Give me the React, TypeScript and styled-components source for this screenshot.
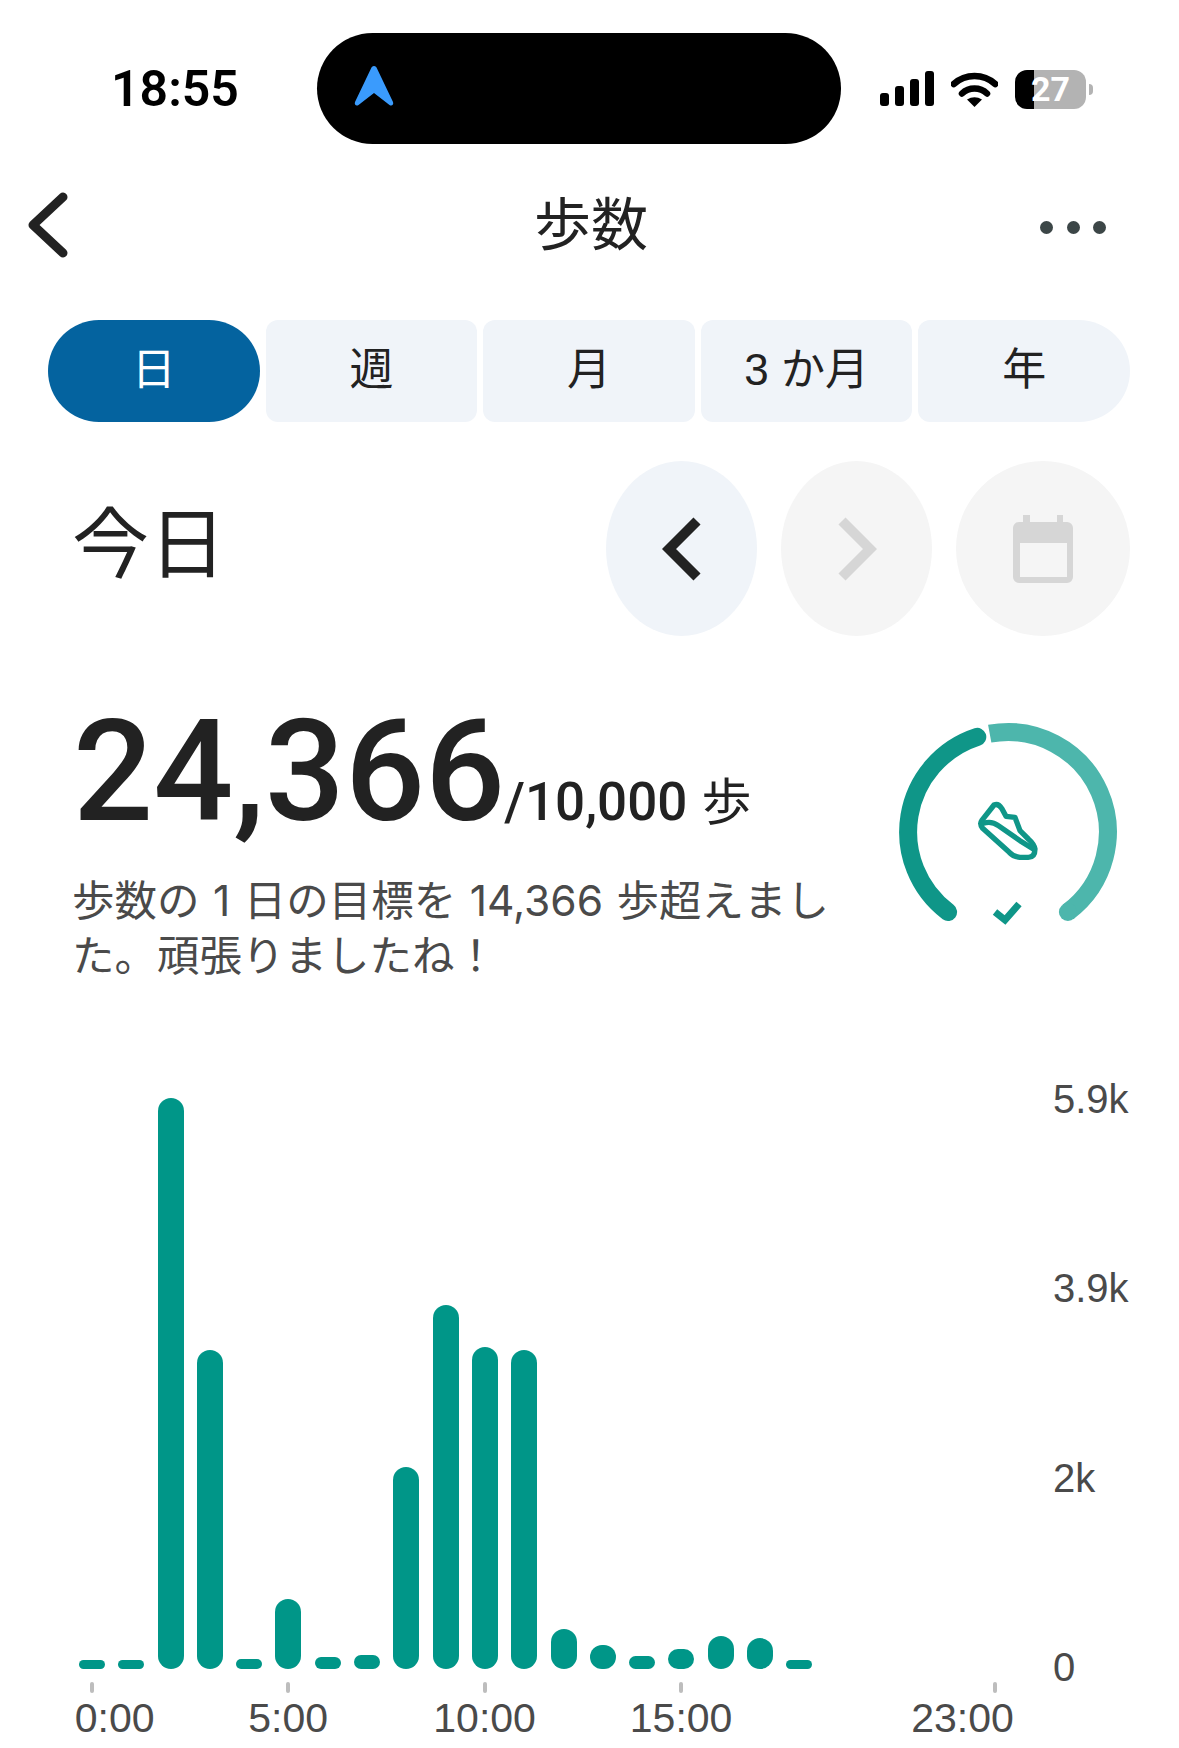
import React from "react";
import styled, { createGlobalStyle } from "styled-components";

const Global = createGlobalStyle`
  html, body { margin: 0; padding: 0; background: #fff; }
  * { box-sizing: border-box; }
`;

const CJK = `"Liberation Sans", "Noto Sans CJK JP", sans-serif`;

const Page = styled.div`
  width: 1179px;
  height: 1748px;
  overflow: hidden;
  background: #fff;
  font-family: ${CJK};
  color: #222;
`;

const StatusBar = styled.header`
  display: flex;
  align-items: center;
  height: 111px;
  margin-top: 33px;
  padding-left: 111px;
`;
const Clock = styled.span`
  width: 206px;
  font: 600 50px/1 Roboto, sans-serif;
  color: #000;
`;
const Island = styled.div`
  width: 524px;
  height: 111px;
  border-radius: 56px;
  background: #000;
  display: flex;
  align-items: center;
  padding-left: 36px;
`;
const Arrow = styled.svg`
  margin-bottom: 6px;
`;
const StatusIcons = styled.div`
  display: flex;
  align-items: center;
  margin-left: 39px;
`;
const Wifi = styled.svg`
  margin-left: 17px;
  margin-top: 1px;
`;
const Battery = styled.div`
  width: 71px;
  height: 39px;
  margin-left: 17px;
  margin-top: 2px;
  border-radius: 12px;
  background: linear-gradient(90deg, #000 27%, #b3b3b3 27%);
  color: #fff;
  font: 700 34px/39px Roboto, sans-serif;
  text-align: center;
`;
const BatteryNub = styled.div`
  width: 4px;
  height: 11px;
  margin-left: 3px;
  margin-top: 2px;
  border-radius: 0 6px 6px 0;
  background: #b3b3b3;
`;

const NavBar = styled.nav`
  display: flex;
  align-items: center;
  justify-content: space-between;
  height: 66px;
  margin-top: 48px;
  padding: 0 73px 0 26px;
`;
const NavTitle = styled.h1`
  margin: 0 0 0 74px;
  font-size: 57px;
  font-weight: 400;
  line-height: 66px;
  color: #222;
`;
const Dots = styled.div`
  display: flex;
  gap: 13.5px;
  margin-top: 4px;
`;
const Dot = styled.span`
  width: 13px;
  height: 13px;
  border-radius: 50%;
  background: #3c4647;
`;

const Tabs = styled.div`
  display: flex;
  gap: 6px;
  height: 102px;
  margin: 62px 49px 0 48px;
`;
const Tab = styled.div<{ $active?: boolean; $first?: boolean; $last?: boolean }>`
  flex: 1;
  display: flex;
  align-items: center;
  justify-content: center;
  padding-bottom: 10px;
  font-size: 44px;
  background: ${(p) => (p.$active ? "#04639f" : "#f0f4f9")};
  color: ${(p) => (p.$active ? "#fff" : "#222")};
  border-radius: ${(p) =>
    p.$first ? "51px" : p.$last ? "12px 51px 51px 12px" : "12px"};
`;

const DateRow = styled.div`
  display: flex;
  align-items: center;
  justify-content: space-between;
  height: 175px;
  margin-top: 39px;
  padding: 0 49px 0 72px;
`;
const Today = styled.h2`
  margin: 0 0 6px;
  font-size: 77px;
  font-weight: 400;
  line-height: 1;
  color: #222;
`;
const RoundButtons = styled.div`
  display: flex;
  gap: 24px;
`;
const RoundButton = styled.div<{ $off?: boolean; $wide?: boolean }>`
  width: ${(p) => (p.$wide ? "174px" : "151px")};
  height: 175px;
  border-radius: 50%;
  display: flex;
  align-items: center;
  justify-content: center;
  background: ${(p) => (p.$off ? "#f5f5f5" : "#f0f4f9")};
`;

const Summary = styled.section`
  display: flex;
  justify-content: space-between;
  margin-top: 61px;
  padding: 0 51px 0 72px;
`;
const SummaryText = styled.div`
  width: 770px;
`;
const Count = styled.div`
  display: flex;
  align-items: baseline;
  height: 150px;
  margin-left: 1px;
  white-space: nowrap;
`;
const CountValue = styled.span`
  font: 500 141px/150px Roboto, sans-serif;
  color: #222;
`;
const CountGoal = styled.span`
  margin-left: -1px;
  font: 500 53px/1 Roboto, "Noto Sans CJK JP", sans-serif;
  color: #222;
`;
const CountUnit = styled.span`
  margin-left: 14px;
  font: 400 50px/1 "Noto Sans CJK JP", sans-serif;
  color: #222;
`;
const Message = styled.p`
  margin: 26px 0 0;
  font-family: Inter, "Noto Sans CJK JP", sans-serif;
  font-size: 42.5px;
  line-height: 55px;
  word-spacing: 1.5px;
  color: #4a4a4a;
`;
const Ring = styled.svg`
  flex: none;
  margin-top: 15px;
`;

const Chart = styled.section`
  display: flex;
  margin-top: 94px;
`;
const Plot = styled.div`
  width: 1053px;
`;
const Bars = styled.div`
  display: flex;
  align-items: flex-end;
  gap: 13.3px;
  height: 592px;
  padding-left: 79px;
`;
const Bar = styled.div`
  width: 26px;
  border-radius: 13px;
  background: #009688;
`;
const AxisGrid = styled.div`
  display: grid;
  grid-template-columns: repeat(24, 39.3px);
  padding-left: 72px;
`;
const Tick = styled.span<{ $col: number }>`
  grid-column: ${(p) => p.$col};
  grid-row: 1;
  justify-self: center;
  width: 4px;
  height: 11px;
  margin-top: 13px;
  border-radius: 2px;
  background: #bdbdbd;
`;
const AxisLabel = styled.span<{ $col: number; $shift?: number }>`
  grid-column: ${(p) => p.$col};
  grid-row: 2;
  justify-self: center;
  margin-left: ${(p) => p.$shift ?? 0}px;
  font-size: 41px;
  line-height: 44px;
  margin-top: 3px;
  white-space: nowrap;
  color: #4a4a4a;
`;
const YAxis = styled.div`
  display: flex;
  flex-direction: column;
  justify-content: space-between;
  height: 612px;
  font-size: 40px;
  line-height: 44px;
  color: #4a4a4a;
`;

const tops = [1660, 1660, 1098, 1350, 1659, 1599, 1657, 1655, 1467, 1305, 1347, 1350, 1629, 1645, 1656, 1649, 1636, 1638, 1660];
const barHeights = tops.map((t) => 1669 - t);
const ticks = [
  { col: 1, label: "0:00", shift: 46 },
  { col: 6, label: "5:00" },
  { col: 11, label: "10:00" },
  { col: 16, label: "15:00" },
  { col: 24, label: "23:00", shift: -66 },
];

export default function App() {
  return (
    <Page>
      <Global />
      <StatusBar>
        <Clock>18:55</Clock>
        <Island>
          <Arrow width="42" height="42" viewBox="0 0 42 42">
            <path d="M21 1 C22.500 1 23.500 2 24 3.500 L40 37 C41 40 38.500 41.500 36.500 40 L21 28 L5.500 40 C3.500 41.500 1 40 2 37 L18 3.500 C18.500 2 19.500 1 21 1 Z" fill="#3a9bfd" />
          </Arrow>
        </Island>
        <StatusIcons>
          <svg width="54" height="35" viewBox="0 0 54 35">
            <rect x="0" y="22" width="9" height="13" rx="3" fill="#000" />
            <rect x="15" y="15" width="9" height="20" rx="3" fill="#000" />
            <rect x="30" y="8" width="9" height="27" rx="3" fill="#000" />
            <rect x="45" y="0" width="9" height="35" rx="3" fill="#000" />
          </svg>
          <Wifi width="47" height="35" viewBox="0 0 47 35">
            <path d="M2.800 12 A31 31 0 0 1 44.200 12" fill="none" stroke="#000" strokeWidth="6.500" strokeLinecap="round" />
            <path d="M11 21.500 A18 18 0 0 1 36 21.500" fill="none" stroke="#000" strokeWidth="6.500" strokeLinecap="round" />
            <path d="M23.500 35 L16 27.500 Q23.500 23 31 27.500 Z" fill="#000" />
          </Wifi>
          <Battery>27</Battery>
          <BatteryNub />
        </StatusIcons>
      </StatusBar>

      <NavBar>
        <svg width="42" height="66" viewBox="0 0 42 66">
          <polyline points="37,5 7,33 37,61" fill="none" stroke="#222" strokeWidth="9" strokeLinecap="round" strokeLinejoin="round" />
        </svg>
        <NavTitle>歩数</NavTitle>
        <Dots>
          <Dot />
          <Dot />
          <Dot />
        </Dots>
      </NavBar>

      <Tabs>
        <Tab $active $first>日</Tab>
        <Tab>週</Tab>
        <Tab>月</Tab>
        <Tab>3 か月</Tab>
        <Tab $last>年</Tab>
      </Tabs>

      <DateRow>
        <Today>今日</Today>
        <RoundButtons>
          <RoundButton>
            <svg width="40" height="66" viewBox="0 0 40 66">
              <polyline points="35,5 7,33 35,61" fill="none" stroke="#222" strokeWidth="10" strokeLinecap="butt" />
            </svg>
          </RoundButton>
          <RoundButton $off>
            <svg width="40" height="66" viewBox="0 0 40 66">
              <polyline points="5,5 33,33 5,61" fill="none" stroke="#d6d6d6" strokeWidth="10" strokeLinecap="butt" />
            </svg>
          </RoundButton>
          <RoundButton $off $wide>
            <svg width="60" height="68" viewBox="0 0 60 68">
              <path d="M10 0 H17 V7 H44 V0 H50 V7 H54 A6 6 0 0 1 60 13 V62 A6 6 0 0 1 54 68 H6 A6 6 0 0 1 0 62 V13 A6 6 0 0 1 6 7 H10 Z M7 28 V62 H54 V28 Z" fill="#d6d6d6" fillRule="evenodd" />
            </svg>
          </RoundButton>
        </RoundButtons>
      </DateRow>

      <Summary>
        <SummaryText>
          <Count>
            <CountValue>24,366</CountValue>
            <CountGoal>/10,000</CountGoal>
            <CountUnit>歩</CountUnit>
          </Count>
          <Message>歩数の 1 日の目標を 14,366 歩超えました。頑張りましたね！</Message>
        </SummaryText>
        <Ring width="240" height="240" viewBox="0 0 240 240">
          <path d="M60.100 200 A100 100 0 0 1 89.300 24.900" fill="none" stroke="#0f9688" strokeWidth="18" strokeLinecap="round" />
          <path d="M101.700 21.700 A100 100 0 0 1 179.900 200" fill="none" stroke="#4db6ac" strokeWidth="18" />
          <circle cx="179.900" cy="200" r="9" fill="#4db6ac" />
          <polyline points="107,200 117,208 131,192" fill="none" stroke="#0f9688" strokeWidth="7" />
          <g transform="translate(82 77) scale(0.3333)" fill="none" stroke="#0f9688" strokeWidth="16" strokeLinejoin="round" strokeLinecap="round">
            <path d="M72 48 L35 95 Q28 105 38 118 L118 190 Q130 203 150 205 L175 205 Q195 205 195 180 Q192 165 175 150 L150 125 L135 85 L108 82 L95 58 Q85 42 72 48 Z" />
            <path d="M40 103 Q65 95 85 110 L150 155 L190 180" />
          </g>
        </Ring>
      </Summary>

      <Chart>
        <Plot>
          <Bars>
            {barHeights.map((h, i) => (
              <Bar key={i} style={{ height: h }} />
            ))}
          </Bars>
          <AxisGrid>
            {ticks.map((t) => (
              <Tick key={t.col} $col={t.col} />
            ))}
            {ticks.map((t) => (
              <AxisLabel key={t.col} $col={t.col} $shift={t.shift}>
                {t.label}
              </AxisLabel>
            ))}
          </AxisGrid>
        </Plot>
        <YAxis>
          <span>5.9k</span>
          <span>3.9k</span>
          <span>2k</span>
          <span>0</span>
        </YAxis>
      </Chart>
    </Page>
  );
}
